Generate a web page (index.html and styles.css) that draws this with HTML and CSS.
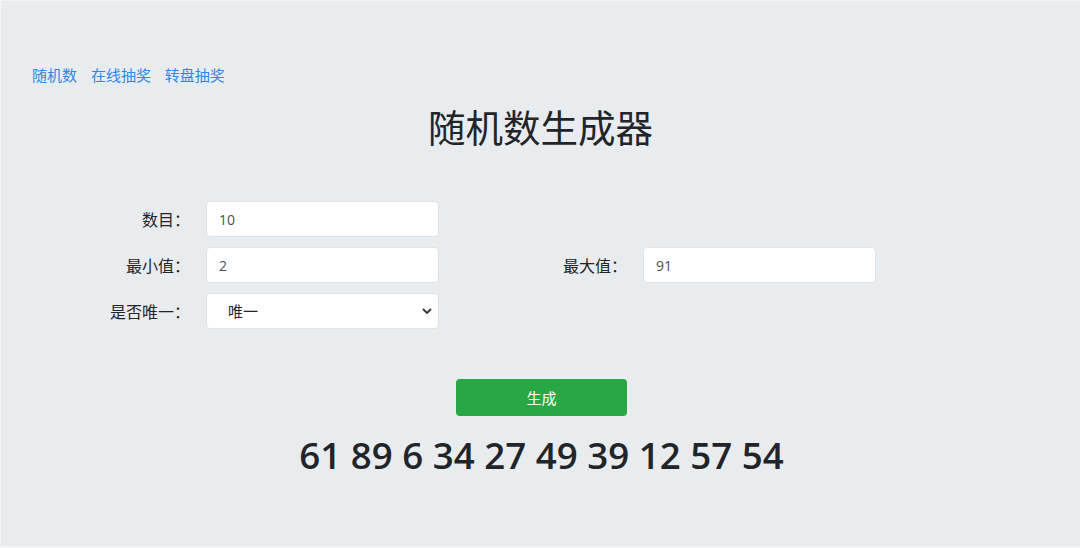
FILE: index.html
```html
<!DOCTYPE html>
<html lang="zh-CN">
<head>
    <meta charset="UTF-8">
    <meta name="viewport" content="width=device-width, initial-scale=1.0">
    <title>随机数生成器</title>
    <link rel="stylesheet" href="styles.css">
</head>
<body>
    <div class="jumbotron">
        <nav class="links">
            <a href="#">随机数</a>
            <a href="#">在线抽奖</a>
            <a href="#">转盘抽奖</a>
        </nav>
        <h1>随机数生成器</h1>
        <form class="form-grid">
            <label for="count">数目：</label>
            <input type="text" id="count" value="10">
            <span></span><span></span>

            <label for="min">最小值：</label>
            <input type="text" id="min" value="2">
            <label for="max">最大值：</label>
            <input type="text" id="max" value="91">

            <label for="unique">是否唯一：</label>
            <select id="unique">
                <option>唯一</option>
                <option>不唯一</option>
            </select>
        </form>
        <div class="actions">
            <button type="button">生成</button>
        </div>
        <div class="result">61 89 6 34 27 49 39 12 57 54</div>
    </div>
</body>
</html>
```

FILE: styles.css
```css
/* 基础 */
body {
    margin: 0;
    background: #f4f5f7;
    font-family: 'Open Sans', 'Noto Sans CJK SC', sans-serif;
    color: #212529;
    font-size: 15px;
}
.jumbotron {
    background: #e9ecef;
    margin: 1px 0 2px 1px;
    height: 545px;
    padding-top: 64px;
    box-sizing: border-box;
}
.links {
    padding-left: 31px;
    line-height: 20px;
}
.links a {
    color: #2f86ec;
    text-decoration: none;
    margin-right: 10px;
}
h1 {
    margin: 20px 0 0;
    text-align: center;
    font-size: 37.5px;
    font-weight: 400;
    line-height: 46px;
}

/* 表单 */
.form-grid {
    display: grid;
    grid-template-columns: 174px 233px 172px 233px;
    grid-auto-rows: 36px;
    column-gap: 16px;
    row-gap: 10px;
    align-items: center;
    padding-left: 15px;
    margin-top: 50px;
}
.form-grid label {
    text-align: right;
    font-family: 'Open Sans', 'Noto Sans CJK JP', sans-serif;
    font-size: 16px;
}
input, select {
    height: 36px;
    box-sizing: border-box;
    border: 1px solid #dfe3e8;
    border-radius: 4px;
    background: #fff;
    font-family: inherit;
    font-size: 14px;
    color: #495057;
    padding: 0 12px;
    outline: none;
}
select {
    appearance: none;
    -webkit-appearance: none;
    padding-left: 21px;
    font-size: 15px;
    color: #212529;
    background: #fff url("data:image/svg+xml;utf8,<svg xmlns='http://www.w3.org/2000/svg' width='10' height='6' viewBox='0 0 10 6'><path d='M1 1l4 4 4-4' fill='none' stroke='%23333' stroke-width='1.8'/></svg>") no-repeat right 6px center;
}

/* 按钮和结果 */
.actions {
    display: flex;
    justify-content: center;
    margin-top: 50px;
    padding-left: 2px;
}
button {
    width: 171px;
    height: 37px;
    background: #28a745;
    color: #fff;
    border: none;
    border-radius: 4px;
    font-family: inherit;
    font-size: 15px;
    cursor: pointer;
}
.result {
    margin-top: 18px;
    text-align: center;
    font-size: 36.7px;
    font-weight: 600;
    line-height: 43px;
    padding-left: 2px;
}
```
